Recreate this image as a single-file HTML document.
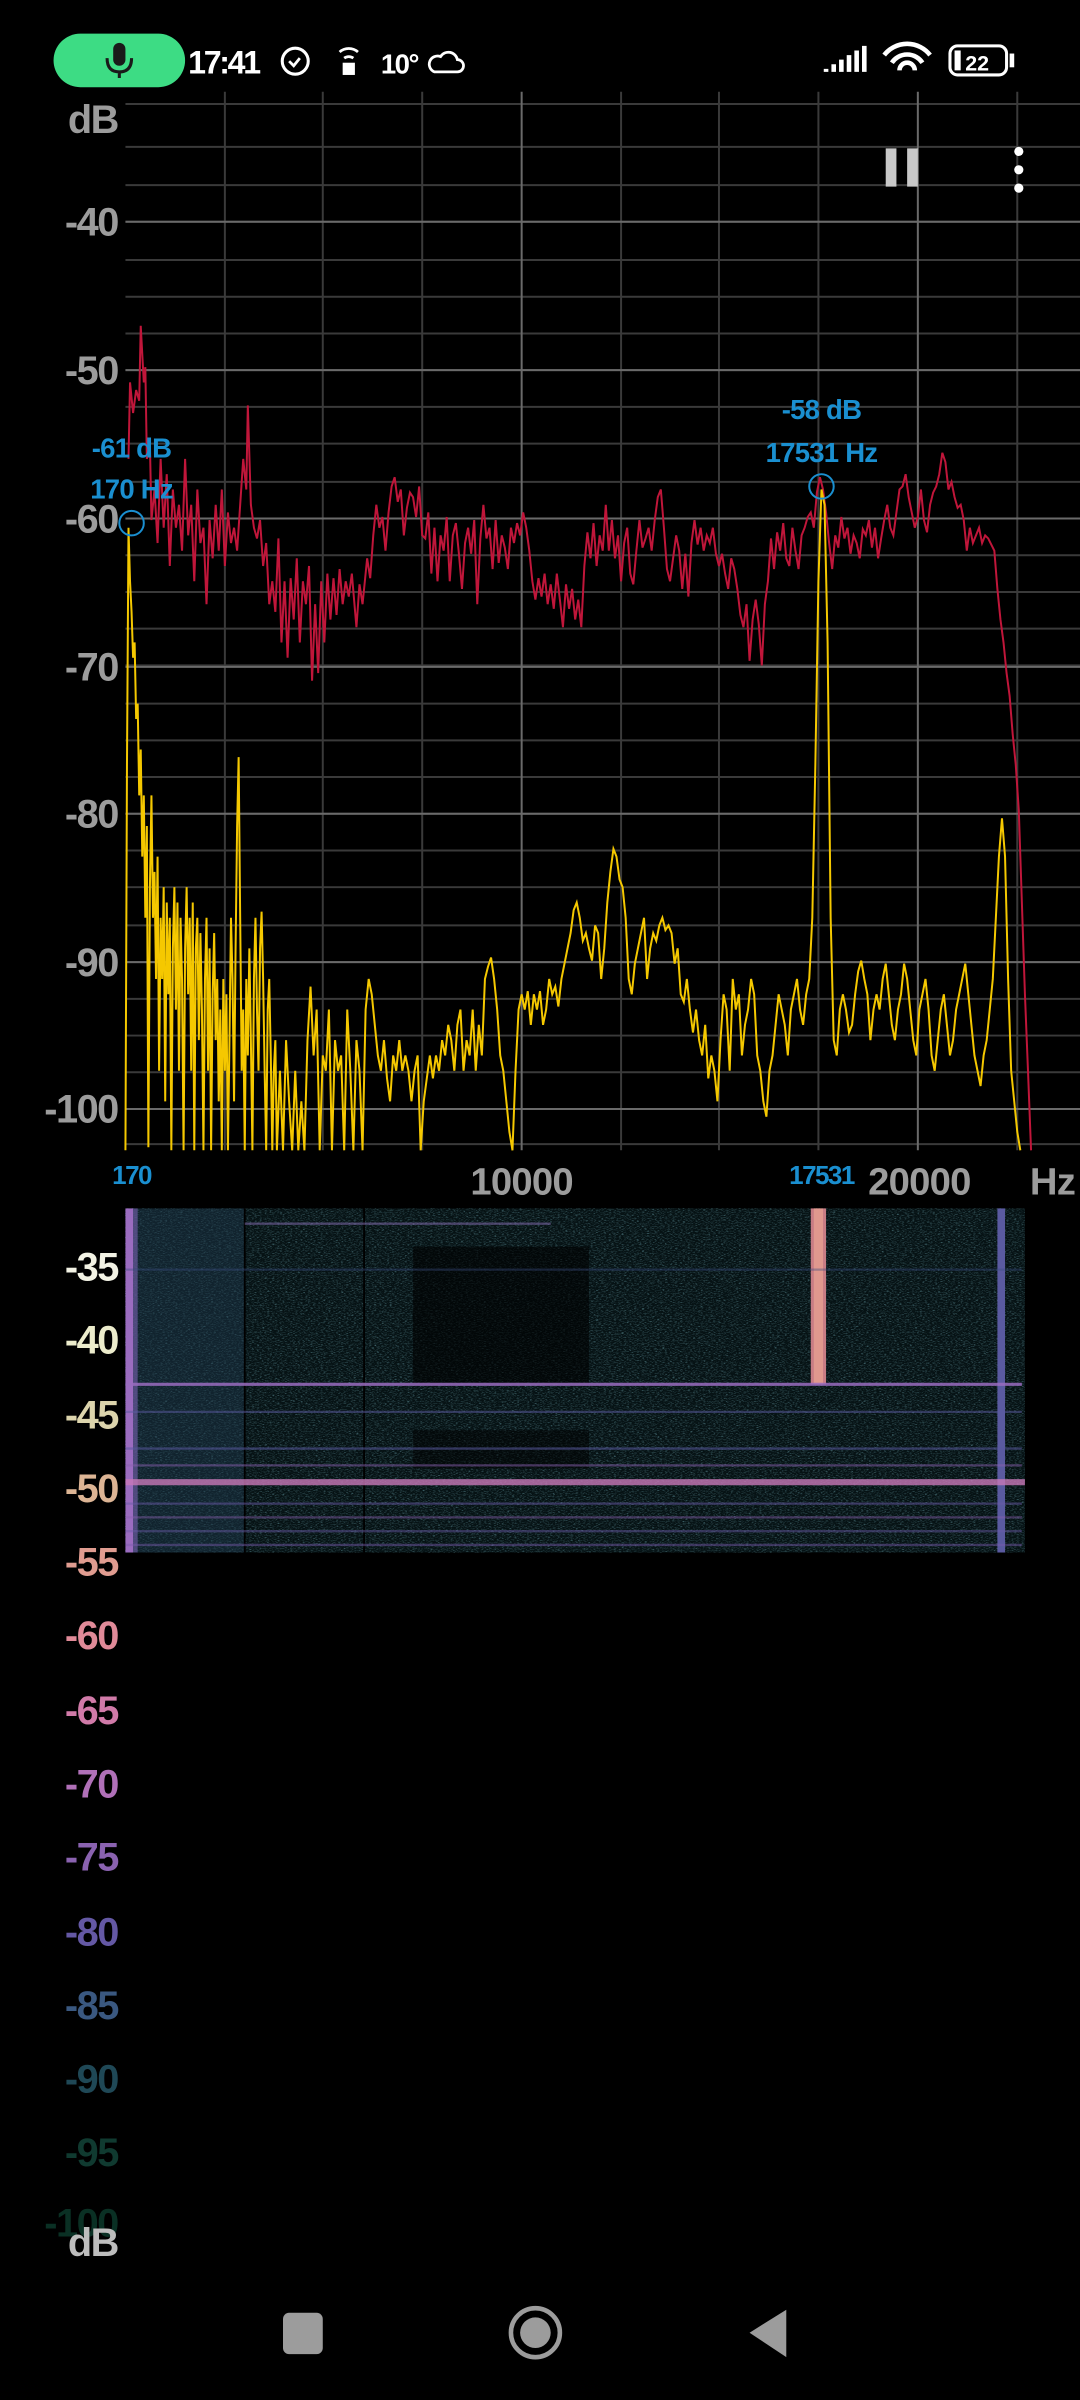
<!DOCTYPE html>
<html><head><meta charset="utf-8"><style>
html,body{margin:0;padding:0;background:#000;width:1080px;height:2400px;overflow:hidden}
svg{display:block}
text{font-family:"Liberation Sans",sans-serif;font-weight:bold}
</style></head><body>
<svg width="1080" height="2400" viewBox="0 0 706 1569" preserveAspectRatio="none" xmlns="http://www.w3.org/2000/svg">
<defs>
<filter id="nz" x="0" y="0" width="100%" height="100%">
<feTurbulence type="fractalNoise" baseFrequency="0.6 2.5" numOctaves="2" seed="3"/>
<feColorMatrix values="0 0 0 0 0.13  0 0 0 0 0.32  0 0 0 0 0.36  0 0 0 1.8 -0.9"/>
</filter>
</defs>
<rect width="706" height="1569" fill="#000"/>
<!-- status bar -->
<rect x="35" y="22" width="86" height="35" rx="17.5" fill="#3ddc84"/>
<rect x="74" y="28" width="8" height="15" rx="4" fill="#1a1a1a"/>
<path d="M70 38 q0 9 8 9 q8 0 8 -9 M78 47 v4" stroke="#1a1a1a" stroke-width="2" fill="none"/>
<text x="123" y="48" fill="#fff" font-size="21" letter-spacing="-1.5">17:41</text>
<circle cx="193" cy="40" r="8.5" stroke="#fff" stroke-width="2" fill="none"/>
<path d="M189 40 l3 3 l4 -5" stroke="#fff" stroke-width="1.8" fill="none"/>
<path d="M222 34 a9 9 0 0 1 12 0 M225 38 a5 5 0 0 1 6 0" stroke="#fff" stroke-width="1.8" fill="none"/>
<rect x="224" y="41" width="8" height="8" fill="#fff"/>
<text x="249" y="48" fill="#fff" font-size="18" letter-spacing="-1">10°</text>
<path d="M284 47 h15 a4 4 0 0 0 0 -8 a6 6 0 0 0 -11 -2 a5 5 0 0 0 -4 10z" stroke="#fff" stroke-width="1.8" fill="none"/>
<path d="M540 47 v-2 M545 47 v-5 M550 47 v-8 M555 47 v-11 M560 47 v-14 M565 47 v-17" stroke="#fff" stroke-width="3"/>
<path d="M578 36 a19 19 0 0 1 30 0 M583 41 a12 12 0 0 1 20 0 M588 46 a5 5 0 0 1 10 0" stroke="#fff" stroke-width="3" fill="none"/>
<rect x="621" y="30" width="37" height="19" rx="5" stroke="#fff" stroke-width="2" fill="none"/>
<rect x="624" y="33" width="4" height="13" fill="#fff"/>
<rect x="660" y="35" width="3" height="9" fill="#fff"/>
<text x="631" y="46" fill="#fff" font-size="14">22</text>
<!-- grid -->
<g stroke="#3a3a3a" stroke-width="1.3">
<path d="M82 68H706 M82 96H706 M82 121H706 M82 145H706 M82 170H706 M82 194H706 M82 218H706 M82 242H706 M82 266H706 M82 290H706 M82 315H706 M82 339H706 M82 363H706 M82 387H706 M82 411H706 M82 435H706 M82 460H706 M82 484H706 M82 508H706 M82 532H706 M82 556H706 M82 580H706 M82 605H706 M82 629H706 M82 653H706 M82 677H706 M82 701H706 M82 725H706 M82 748H706"/>
<path d="M147 60V752 M211 60V752 M276 60V752 M406 60V752 M470 60V752 M535 60V752 M665 60V752"/>
</g>
<g stroke="#6a6a6a" stroke-width="1.3">
<path d="M82 145H706 M82 242H706 M82 339H706 M82 436H706 M82 532H706 M82 629H706 M82 725H706"/>
<path d="M341 60V752 M600 60V752"/>
</g>
<!-- y labels -->
<g fill="#9c9c9c" font-size="26" text-anchor="end" letter-spacing="-1">
<text x="77" y="87">dB</text>
<text x="77" y="154">-40</text>
<text x="77" y="251">-50</text>
<text x="77" y="348">-60</text>
<text x="77" y="445">-70</text>
<text x="77" y="541">-80</text>
<text x="77" y="638">-90</text>
<text x="77" y="734">-100</text>
</g>
<!-- pause / menu -->
<rect x="579" y="97" width="7" height="25" fill="#c8c8c8"/>
<rect x="593" y="97" width="7" height="25" fill="#c8c8c8"/>
<circle cx="666" cy="99" r="3" fill="#fff"/><circle cx="666" cy="111" r="3" fill="#fff"/><circle cx="666" cy="123" r="3" fill="#fff"/>
<!-- red curve -->
<polyline fill="none" stroke="#c0163a" stroke-width="1.3" points="84,300 85,250 87,270 89,255 91,262 92,213 94,250 95,240 96,300 98,290 99,340 101,320 103,355 105,300 107,345 109,310 111,370 113,320 115,345 117,330 119,360 121,300 123,350 125,330 127,380 129,320 131,355 133,345 135,395 137,340 139,365 141,330 143,360 145,320 147,370 149,335 151,355 153,345 155,360 157,330 159,300 161,320 162,265 164,330 166,345 168,352 170,340 172,370 174,355 176,395 178,380 180,400 182,352 184,420 186,380 188,430 190,378 192,405 194,365 196,420 198,380 200,395 202,370 204,445 206,395 208,440 210,380 212,420 214,375 216,405 218,378 220,402 222,372 224,395 226,380 228,390 230,375 233,410 235,382 237,395 240,365 242,378 244,350 246,330 248,345 250,338 252,360 254,335 256,318 258,312 260,328 262,320 264,350 266,332 268,322 270,325 272,338 274,318 276,350 278,352 280,335 282,375 284,345 286,380 288,350 290,360 292,338 294,380 296,350 298,342 300,362 302,385 304,355 306,345 308,362 310,340 312,395 314,352 316,330 318,352 320,345 322,372 324,340 326,368 328,350 330,358 332,372 334,345 336,355 338,342 340,350 342,335 344,345 346,360 348,380 350,392 352,378 354,390 356,375 358,395 360,382 362,398 364,375 366,392 368,410 370,382 372,398 374,385 376,405 378,392 380,410 382,370 384,348 386,365 388,342 390,370 392,350 394,360 396,330 398,360 400,340 402,365 404,350 406,380 408,355 410,345 412,375 414,382 416,360 418,340 420,358 422,352 424,345 426,360 428,340 430,325 432,320 434,345 436,372 438,380 440,365 442,350 444,360 446,385 448,362 450,390 452,355 454,340 456,356 458,345 460,360 462,350 464,355 466,345 468,362 470,370 472,362 474,375 476,385 478,365 480,372 482,385 484,402 486,410 488,395 490,432 492,405 494,392 496,408 498,435 500,395 502,380 504,352 506,372 508,348 510,360 512,342 514,365 516,370 518,345 520,360 522,372 524,350 526,345 528,338 530,335 532,345 534,322 536,312 538,320 540,335 542,355 544,372 546,350 548,358 550,338 552,352 554,345 556,362 558,350 560,355 562,365 564,346 566,350 568,340 570,358 572,345 574,365 576,352 578,340 580,330 582,345 584,350 586,335 588,320 590,318 592,310 594,325 596,335 598,345 600,338 602,320 604,340 606,348 608,330 610,322 612,318 614,310 616,296 618,302 620,320 622,315 624,325 626,332 628,330 630,340 632,360 634,345 636,355 638,350 640,345 642,355 644,350 646,352 648,356 650,360 652,385 654,405 656,420 658,440 660,455 662,480 664,500 666,530 668,590 670,650 672,700 674,752"/>
<!-- yellow curve -->
<polyline fill="none" stroke="#f5c800" stroke-width="1.3" points="82,752 83,500 84,345 85,380 86,400 87,430 88,420 89,470 90,460 91,520 92,490 93,560 94,520 95,600 96,540 97,750 98,580 99,520 100,600 101,570 102,640 103,560 104,700 105,600 106,640 107,580 108,720 109,590 110,650 111,600 112,752 113,620 114,580 115,660 116,590 117,700 118,600 119,640 120,752 121,620 122,580 123,650 124,600 125,700 126,590 127,752 128,620 129,600 130,680 131,610 132,660 133,752 134,640 135,600 136,700 137,620 138,752 139,650 140,610 141,680 142,640 143,720 144,660 145,752 146,640 147,700 148,650 149,752 150,680 151,600 152,640 153,720 154,620 155,540 156,495 157,600 158,700 159,660 160,752 161,640 162,690 163,620 164,680 165,752 166,640 167,600 168,660 169,700 170,620 171,596 172,640 173,700 174,752 175,660 176,640 177,690 178,752 179,700 180,680 181,752 183,700 185,752 187,680 189,720 191,752 193,700 195,752 197,720 199,752 201,680 203,645 205,690 207,660 209,752 211,690 213,700 215,660 217,752 219,680 221,700 223,690 225,752 227,660 229,700 231,752 233,680 235,700 237,752 239,660 241,640 243,650 245,670 247,690 249,700 251,680 253,705 255,720 257,690 259,700 261,680 263,700 265,690 267,700 269,720 271,700 273,690 275,752 277,720 279,705 281,690 283,705 285,690 287,700 289,680 291,690 293,670 295,680 297,700 299,670 301,660 303,700 305,680 307,690 309,660 311,700 313,670 315,690 317,640 319,632 321,626 323,640 325,660 327,690 329,700 331,720 333,740 335,752 337,700 339,660 341,650 343,660 345,648 347,670 349,650 351,660 353,648 355,670 357,660 359,640 361,650 363,645 365,658 367,640 369,630 371,620 373,610 375,595 377,590 379,600 381,615 383,610 385,620 387,628 389,605 391,610 393,640 395,620 397,590 399,570 401,555 403,560 405,575 407,580 409,600 411,640 413,650 415,630 417,620 419,610 421,600 423,640 425,620 427,610 429,615 431,605 433,600 435,608 437,605 439,610 441,630 443,620 445,650 447,655 449,640 451,660 453,675 455,660 457,680 459,690 461,670 463,705 465,690 467,700 469,720 471,680 473,650 475,660 477,700 479,640 481,660 483,650 485,690 487,670 489,660 491,640 493,650 495,690 497,700 499,720 501,730 503,700 505,690 507,670 509,650 511,660 513,670 515,690 517,660 519,650 521,640 523,660 525,670 527,650 529,640 531,600 533,500 535,380 537,320 539,330 541,420 543,600 545,680 547,690 549,660 551,650 553,660 555,675 557,670 559,650 561,635 563,628 565,640 567,650 569,680 571,660 573,650 575,660 577,640 579,630 581,650 583,670 585,680 587,660 589,650 591,630 593,640 595,660 597,680 599,690 601,660 603,650 605,640 607,660 609,690 611,700 613,680 615,660 617,650 619,670 621,690 623,680 625,660 627,650 629,640 631,630 633,650 635,670 637,690 639,700 641,710 643,690 645,680 647,660 649,640 651,600 653,560 655,535 657,560 659,640 661,700 663,720 665,740 667,752"/>
<!-- markers -->
<circle cx="86" cy="342" r="8" stroke="#1a8fd0" stroke-width="1.3" fill="none"/>
<circle cx="537" cy="318" r="8" stroke="#1a8fd0" stroke-width="1.3" fill="none"/>
<g fill="#1a8fd0" font-size="18" text-anchor="middle" letter-spacing="-0.5">
<text x="86" y="299">-61 dB</text>
<text x="86" y="326">170 Hz</text>
<text x="537" y="274">-58 dB</text>
<text x="537" y="302">17531 Hz</text>
</g>
<!-- x labels -->
<text x="86" y="774" fill="#1a8fd0" font-size="17" text-anchor="middle" letter-spacing="-1">170</text>
<text x="537" y="774" fill="#1a8fd0" font-size="17" text-anchor="middle" letter-spacing="-1">17531</text>
<g fill="#9c9c9c" font-size="25" text-anchor="middle" letter-spacing="-0.5">
<text x="341" y="781">10000</text>
<text x="601" y="781">20000</text>
<text x="688" y="781">Hz</text>
</g>
<!-- spectrogram -->
<rect x="82" y="790" width="588" height="225" fill="#061214"/>
<rect x="82" y="790" width="588" height="225" filter="url(#nz)"/>
<rect x="82" y="790" width="78" height="225" fill="#1e3a4e" opacity="0.45"/>
<rect x="270" y="815" width="115" height="90" fill="#000" opacity="0.6"/>
<rect x="270" y="935" width="115" height="25" fill="#000" opacity="0.5"/>
<rect x="82" y="790" width="5" height="225" fill="#9b6cc0"/>
<rect x="87" y="790" width="3" height="225" fill="#6a5aa0" opacity="0.7"/>
<path d="M160 790V1015 M238 790V1015" stroke="#000" stroke-width="1.2"/>
<rect x="530" y="790" width="10" height="115" fill="#c87c84"/>
<rect x="532" y="790" width="6" height="115" fill="#e0988e"/>
<rect x="652" y="790" width="5" height="225" fill="#5a5aa0"/>
<g stroke-width="1.5" fill="none">
<path d="M160 800H360" stroke="#8a70b8" opacity="0.5"/>
<path d="M82 905H668" stroke="#9a6cc0" stroke-width="2" opacity="0.85"/>
<path d="M82 923H668" stroke="#5a5aa0" opacity="0.5"/>
<path d="M82 947H668" stroke="#5a5aa0" opacity="0.55"/>
<path d="M82 958H668" stroke="#8a60b0" opacity="0.5"/>
<path d="M82 969H670" stroke="#c878b8" stroke-width="4" opacity="0.8"/>
<path d="M82 983H668" stroke="#6a5aa8" opacity="0.5"/>
<path d="M82 992H668" stroke="#8a60b0" opacity="0.45"/>
<path d="M82 1001H668" stroke="#6a5aa8" opacity="0.45"/>
<path d="M82 1010H668" stroke="#7a5ab0" opacity="0.45"/>
<path d="M82 830H668" stroke="#3a4a80" opacity="0.4"/>
</g>
<rect x="82" y="1015" width="600" height="10" fill="#000"/>
<!-- spectrogram labels -->
<g font-size="26" text-anchor="end" letter-spacing="-1">
<text x="77" y="837" fill="#f2f2e4">-35</text>
<text x="77" y="885" fill="#ececcc">-40</text>
<text x="77" y="934" fill="#dcd4ac">-45</text>
<text x="77" y="982" fill="#dcb494">-50</text>
<text x="77" y="1030" fill="#e09c90">-55</text>
<text x="77" y="1078" fill="#e08a98">-60</text>
<text x="77" y="1127" fill="#d07aa8">-65</text>
<text x="77" y="1175" fill="#b070b8">-70</text>
<text x="77" y="1223" fill="#8a62b0">-75</text>
<text x="77" y="1272" fill="#6458a4">-80</text>
<text x="77" y="1320" fill="#3a5880">-85</text>
<text x="77" y="1368" fill="#1f4856">-90</text>
<text x="77" y="1416" fill="#103a30">-95</text>
<text x="77" y="1462" fill="#0a3024">-100</text>
<text x="77" y="1475" fill="#bdbdbd">dB</text>
</g>
<!-- nav -->
<rect x="185" y="1512" width="26" height="27" rx="4" fill="#9c9c9c"/>
<circle cx="350" cy="1525" r="16" stroke="#9c9c9c" stroke-width="3" fill="none"/>
<circle cx="350" cy="1525" r="10" fill="#9c9c9c"/>
<path d="M514 1510 V1541 L490 1525 Z" fill="#9c9c9c"/>
</svg>
</body></html>
